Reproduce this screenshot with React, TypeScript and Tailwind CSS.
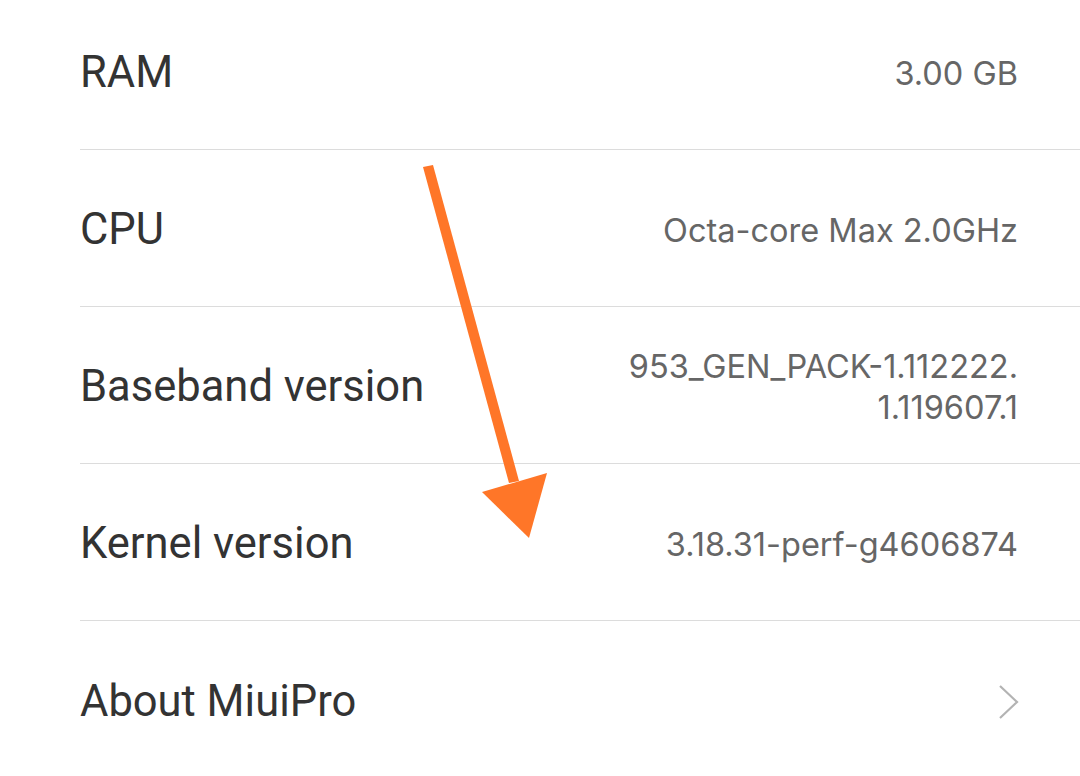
const rows = [
  { label: "RAM", value: ["3.00 GB"] },
  { label: "CPU", value: ["Octa-core Max 2.0GHz"] },
  { label: "Baseband version", value: ["953_GEN_PACK-1.112222.", "1.119607.1"] },
  { label: "Kernel version", value: ["3.18.31-perf-g4606874"] },
];

const App = () => {
  return (
    <div
      className="relative w-[1080px] h-[776px] overflow-hidden bg-white"
      style={{ fontFamily: "Roboto, 'Noto Sans', sans-serif" }}
    >
      <div className="-mt-[7px] pl-20">
        {rows.map((row) => (
          <div
            key={row.label}
            className="flex h-[157px] items-center justify-between border-b border-[#dcdcdc] pt-[4px] pr-[62px]"
          >
            <span className="text-[43.5px] text-[#333333]">{row.label}</span>
            <div className="text-right font-['Inter',sans-serif] text-[32.5px] leading-[41px] text-[#666666]">
              {row.value.map((v) => (
                <div key={v}>{v}</div>
              ))}
            </div>
          </div>
        ))}
        <div className="flex h-[157px] items-center justify-between pt-[4px] pr-[60px]">
          <span className="text-[43.5px] text-[#333333]">About MiuiPro</span>
          <svg width="22" height="36" viewBox="0 0 22 36" fill="none">
            <path d="M2 2 L19 18 L2 34" stroke="#b3b3b3" strokeWidth="2.2" />
          </svg>
        </div>
      </div>

      {/* annotation arrow */}
      <svg className="absolute left-0 top-0" width="1080" height="776">
        <polygon points="423,167 433,165 519,481 509,483" fill="#ff7628" />
        <polygon points="482,492 547,473 529,538" fill="#ff7628" />
      </svg>
    </div>
  );
};

export default App;
